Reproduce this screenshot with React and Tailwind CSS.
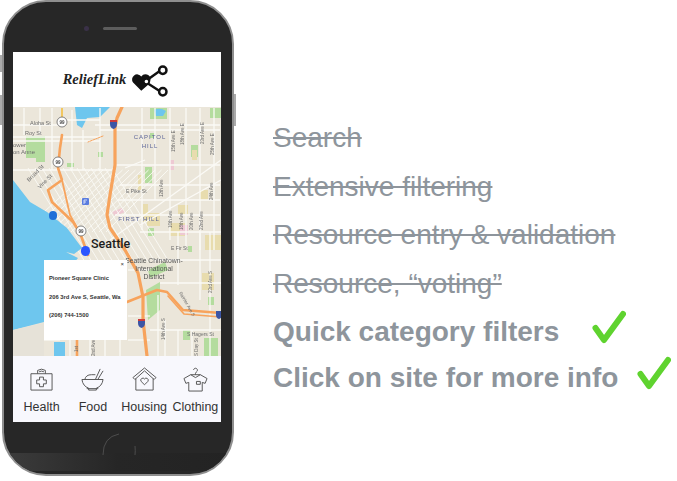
const sans = { fontFamily: '"Liberation Sans", Arial, sans-serif' };

const W = "#fbfaf6";
const roads = [
  "M13 137H100","M13 141H100","M62 120H100","M13 170H112","M13 125H60","M100 108V170","M95 125H220",
  "M72 110V170","M83 130V170","M100 130H220","M142 108V230","M155 108V200","M170 108V240","M186 108V250","M200 108V250","M214 108V250",
  "M115 165H220","M120 185H220","M118 200H220","M115 215H220","M125 168L145 160","M40 108V135","M24 108V135","M52 108V170",
  "M110 240L221 160","M140 225L221 180",
  "M140 232H221","M155 260H221","M160 283H221","M150 330H221","M178 330V356","M200 232V300","M178 232V285","M210 232V356","M165 320V356","M192 330V356",
  "M158 295V356","M128 340H150","M128 316H150","M128 270H150","M60 340H44","M70 340V356","M90 340V356","M105 340V356","M120 340V356",
  "M22 356V345Q24 340 40 340",
];
const downtown = [];
for (let i = 0; i < 13; i++) {
  downtown.push(`M${28 + i * 7} ${168} L${85 + i * 7} ${262}`);
  downtown.push(`M${22 + i * 7} ${232} L${90 + i * 6.5} ${170}`);
}
const parks = [
  "M26 136H45V162H36V158H26Z","M150 108H167V119H150Z","M145 167H152V183H145Z","M191 145H198V157H191Z","M67 163H74V167H67Z","M148 228H154V236H148Z",
  "M204 338H218V356H204Z","M210 108H221V118H210Z","M146 290L160 282V310L148 320Z","M183 330H190V340H183Z","M188 246H192V252H188Z",
  "M148 270L165 262L168 270L150 278Z","M208 297H214V305H208Z","M98 152H103V157H98Z","M150 133H154V138H150Z",
];
const beige = ["M138 175H142V190H138Z","M143 204H148V222H143Z","M192 150H197V160H192Z","M147 213H160V226H147Z","M170 223H185V236H170Z","M200 190H208V200H200Z","M205 235H221V250H205Z","M178 205H188V214H178Z","M202 273H214V290H202Z"];

function MapDrawing() {
  return (
    <svg viewBox="13 107 208 249" className="block h-full w-full blur-[0.5px]">
      <rect x="13" y="107" width="208" height="249" fill="#ebe6da" />
      {parks.map((d, i) => <path key={i} d={d} fill="#b4dc9e" />)}
      {beige.map((d, i) => <path key={i} d={d} fill="#e8dcae" />)}
      <path d="M170 160h4v10h-4zM112 212l10-4 3 4-10 4zM180 225h8v10h-8z" fill="#eec9d3" />
      <path d="M75 107H110L100 117L87 118L82 128L77 125Z" fill="#6ec6ee" />
      <path d="M154 110Q160 107 166 111L163 116H156Z" fill="#6ec6ee" />
      <g fill="none" stroke={W} strokeWidth="1.3">
        {roads.map((d, i) => <path key={i} d={d} />)}
        {downtown.map((d, i) => <path key={i} d={d} strokeWidth="0.9" />)}
      </g>
      <path d="M13 180L30 202L47 212L67 228L82 248L78 251L74 254L66 252L78 258L60 280L44 322L13 330Z" fill="#6ec6ee" />
      <path d="M13 330L44 323V356H13Z" fill="#e6e2d8" />
      <path d="M54 342H65V356H54Z" fill="#6ec6ee" />
      <g fill="none" stroke="#f7a35c" strokeWidth="2.6" strokeLinejoin="round" strokeLinecap="round">
        <path d="M122 107L117 118L115 128V165L110 195L107 215L110 228L125 250L138 273L143 297V320L147 356" strokeWidth="3.2" />
        <path d="M62 135L60 148L58 168L62 180L48 190L52 202L73 222L80 233L88 255" />
        <path d="M62 180L70 215L80 233" strokeWidth="1.8" />
        <path d="M77 340V356" />
        <path d="M127 302L157 290L167 292L183 310L221 313" />
        <path d="M168 296L184 314L221 317" strokeWidth="1.6" />
        <path d="M103 136L88 142" strokeWidth="1" strokeDasharray="2 1" />
      </g>
      <path d="M62 108V122" stroke="#f2c75f" strokeWidth="2" />
      <g fill="#fff" stroke="#666" strokeWidth="0.8"><circle cx="62" cy="122" r="5" /><circle cx="58" cy="162" r="5" /><circle cx="81" cy="231" r="5" /></g>
      <g fontSize="4.5" fontWeight="700" textAnchor="middle" fill="#444" style={sans}><text x="62" y="124">99</text><text x="58" y="164">99</text><text x="81" y="233">99</text></g>
      <g>
        <path d="M110 120h7v4q0 4-3.500 5q-3.500-1-3.500-5z" fill="#3c55a5" /><path d="M110 120h7v2h-7z" fill="#cf3b3b" />
        <path d="M138 319h7v4q0 4-3.500 5q-3.500-1-3.500-5z" fill="#3c55a5" /><path d="M138 319h7v2h-7z" fill="#cf3b3b" />
        <path d="M216 311h6v4q0 3-3 4q-3-1-3-4z" fill="#3c55a5" />
      </g>
      <rect x="82" y="198" width="7" height="7" rx="1" fill="#5b7ddf" /><path d="M84 204v-4h3M84 202h2" stroke="#fff" strokeWidth="0.7" fill="none" />
      <g fill="#6d6d6d" fontSize="5.500" style={sans}>
        <text x="30" y="125">Aloha St</text><text x="25" y="135">Roy St</text><text x="13" y="147" fontSize="6">ower</text><text x="13" y="154" fontSize="6">on Anne</text>
        <text transform="translate(29 182) rotate(-45)">Broad St</text><text transform="translate(40 189) rotate(-45)">Vine St</text>
        <text x="126" y="193" fontSize="5">E Pike St</text><text x="171" y="250" fontSize="5">E Fir St</text><text x="187" y="336" fontSize="5">S Hagers St</text>
        {[[175,152,"15th Ave E"],[184,145,"18th Ave E"],[204,144,"23rd Ave E"],[214,155,"25th Ave E"],[163,197,"12th Ave"],[213,200,"24th Ave"],[172,228,"16th Ave"],[183,230,"18th Ave"],[193,230,"20th Ave"],[203,230,"22nd Ave"],[212,293,"23rd Ave S"],[165,340,"14th Ave S"],[198,356,"S Day St"],[95,356,"2nd Ave"],[78,352,"1st"],[179,293,"Rainier Ave S"]].map(([x,y,t],i) => (
          <text key={i} transform={`translate(${x} ${y}) rotate(${t.startsWith("Rainier") ? 60 : -90})`} fontSize="4.500">{t}</text>
        ))}
      </g>
      <g fill="#5c6598" fontSize="6" letterSpacing="1" textAnchor="middle" style={sans}>
        <text x="150" y="139">CAPITOL</text><text x="150" y="148">HILL</text><text x="139" y="221">FIRST HILL</text>
      </g>
      <g fill="#555" fontSize="6.800" textAnchor="middle" style={sans}>
        <text x="154" y="263">Seattle Chinatown-</text><text x="154" y="271">International</text><text x="154" y="279">District</text>
      </g>
    </svg>
  );
}

function Health() {
  return (
    <svg viewBox="0 0 26 26" className="h-[25px] w-[25px]" fill="none" stroke="#555" strokeWidth="1">
      <path d="M2 7h22v17H2z" /><path d="M9 7V3.500Q13 1 17 3.500V7M10.500 5Q13 3.500 15.500 5" />
      <path d="M11 10.500h4v3h3v4h-3v3h-4v-3H8v-4h3z" />
    </svg>
  );
}
function Food() {
  return (
    <svg viewBox="0 0 26 26" className="h-[25px] w-[25px]" fill="none" stroke="#555" strokeWidth="1">
      <path d="M2 13h22Q23 20 17 22v2H9v-2Q3 20 2 13Z" /><path d="M7 22.500h12" /><path d="M5 13Q6 8 12 8h4" /><path d="M16 13L21 2M18.500 13L24 4" />
    </svg>
  );
}
function House() {
  return (
    <svg viewBox="0 0 26 26" className="h-[25px] w-[25px]" fill="none" stroke="#555" strokeWidth="1">
      <path d="M1 11L13 1l12 10-2 2L13 4 3 13Z" /><path d="M4 12v12h18V12" />
      <path d="M13 18.500l-3.500-3.500a2 2 0 0 1 3.500-2.500a2 2 0 0 1 3.500 2.500Z" />
    </svg>
  );
}
function Shirt() {
  return (
    <svg viewBox="0 0 26 26" className="h-[25px] w-[25px]" fill="none" stroke="#555" strokeWidth="1">
      <path d="M11 3a2 2 0 1 1 3 2l-1 1.500V8" /><path d="M8 8h10l7 4-2 5-3-1v9H6v-9l-3 1-2-5Z" /><path d="M8 8l5 3 5-3" /><path d="M14 15h4v3h-4z" />
    </svg>
  );
}

const cats = [["Health", Health], ["Food", Food], ["Housing", House], ["Clothing", Shirt]];

function Logo() {
  return (
    <div className="flex h-[55px] items-center justify-center bg-white">
      <span className="text-[14.5px] font-bold italic leading-none text-[#222]" style={{ fontFamily: '"Liberation Serif", serif' }}>ReliefLink</span>
      <svg viewBox="0 0 40 32" className="ml-[4px] mt-[2px] h-[33px] w-[41px]" fill="none" stroke="#111" strokeWidth="2.400">
        <path d="M11 26L3 18a5 5 0 0 1 8-6a5 5 0 0 1 9 3q0 3-2 5Z" fill="#111" stroke="none" />
        <path d="M16 16L30 6M16 18L30 27" />
        <circle cx="32" cy="6" r="3.600" fill="#fff" /><circle cx="32" cy="27" r="3.600" fill="#fff" /><circle cx="16" cy="17" r="2.500" fill="#fff" strokeWidth="1.500" />
      </svg>
    </div>
  );
}

function Phone() {
  return (
    <div className="relative ml-[2px] h-[476px] w-[232px] shrink-0 rounded-[44px] border-[2px] border-[#8f8f8f] bg-[#272727]">
      <span className="absolute -left-[4px] top-[53px] h-[17px] w-[2px] bg-[#aaa]" />
      <span className="absolute -left-[4px] top-[93px] h-[30px] w-[2px] bg-[#aaa]" />
      <span className="absolute -right-[4px] top-[92px] h-[32px] w-[2px] bg-[#aaa]" />
      <span className="absolute left-[80px] top-[24px] h-[5px] w-[5px] rounded-full bg-[#3a3148]" />
      <span className="absolute left-[99px] top-[25px] h-[3px] w-[34px] rounded-full bg-[#5d5d5d]" />
      <div className="absolute inset-0 overflow-hidden rounded-[42px]">
        <span className="absolute bottom-[3px] left-0 right-0 h-[18px] bg-gradient-to-r from-[#3c3c3c] via-[#262626] to-[#232323]" />
      </div>
      <svg viewBox="0 0 34 24" className="absolute left-[98px] top-[431px] h-[24px] w-[34px]" fill="none" stroke="#4d4d4d" strokeWidth="1">
        <path d="M1 22Q1 4 17 1M33 13Q33.500 18 33 22" />
      </svg>
      <div className="absolute left-[9px] top-[50px] flex h-[370px] w-[208px] flex-col overflow-hidden">
        <Logo />
        <div className="relative h-[249px] shrink-0">
          <MapDrawing />
          <span className="absolute left-[36px] top-[104px] h-[9px] w-[8px] rounded-full bg-[#1f6fd8]" />
          <span className="absolute left-[68px] top-[139px] h-[10px] w-[9px] rounded-full bg-[#2b55ff]" />
          <span className="absolute left-[78px] top-[129px] text-[12.5px] font-medium leading-4 text-[#1c1c1c]" style={{ fontFamily: 'Roboto, sans-serif' }}>Seattle</span>
          <div className="absolute left-[31px] top-[153px] flex h-[80px] w-[83px] flex-col bg-white pl-[5px] pt-[15px] text-[5.8px] font-bold leading-[7px] text-[#333]" style={sans}>
            <span className="absolute right-[3px] top-[1px] text-[6px] font-normal">×</span>
            <p>Pioneer Square Clinic</p>
            <p className="mt-[12px] whitespace-nowrap">206 3rd Ave S, Seattle, Wa</p>
            <p className="mt-[11px]">(206) 744-1500</p>
          </div>
        </div>
        <div className="grid flex-1 grid-cols-4 bg-[#f8f8fd] pl-[3px] pt-[11px]">
          {cats.map(([label, Icon]) => (
            <div key={label} className="flex flex-col items-center">
              <Icon />
              <span className="mt-[8px] whitespace-nowrap text-[12.5px] leading-[15px] text-[#333]" style={sans}>{label}</span>
            </div>
          ))}
        </div>
      </div>
    </div>
  );
}

function Check() {
  return (
    <svg viewBox="0 0 34 34" className="h-[34px] w-[34px] shrink-0" fill="none" stroke="#5fd32f" strokeWidth="6" strokeLinecap="round" strokeLinejoin="round">
      <path d="M3.500 18L12 30L31 4" />
    </svg>
  );
}

const struck = ["Search", "Extensive filtering", "Resource entry & validation", "Resource, “voting”"];

export default function App() {
  return (
    <div className="flex h-[481px] w-[677px] overflow-hidden bg-white" style={sans}>
      <Phone />
      <div className="ml-[39px] mt-[114px] flex flex-col text-[28px] leading-[48.5px] text-[#8e959c]">
        {struck.map((t) => <p key={t} className="whitespace-nowrap line-through">{t}</p>)}
        <p className="flex items-center whitespace-nowrap font-bold">Quick category filters<span className="ml-[33px] -mt-[10px]"><Check /></span></p>
        <p className="-mt-[2.5px] flex items-center whitespace-nowrap font-bold">Click on site for more info<span className="ml-[19px] -mt-[10px]"><Check /></span></p>
      </div>
    </div>
  );
}
